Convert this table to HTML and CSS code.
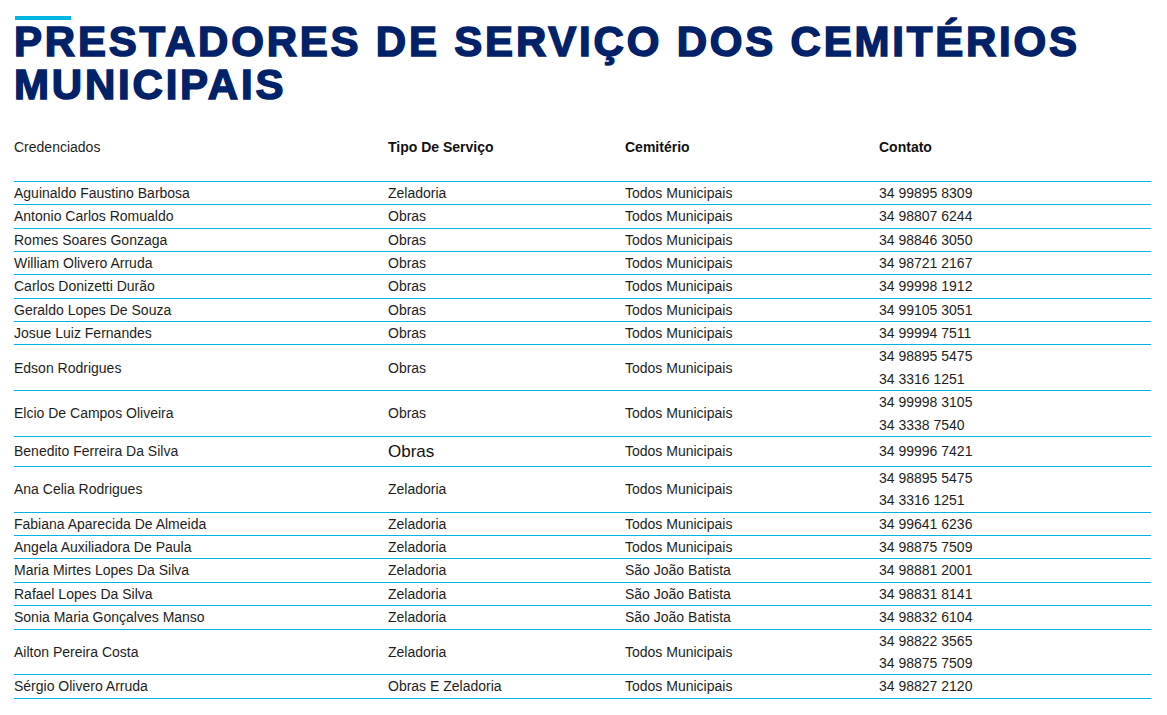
FILE: index.html
```html
<!DOCTYPE html>
<html lang="pt-BR">
<head>
<meta charset="utf-8">
<title>Prestadores de Serviço dos Cemitérios Municipais</title>
<link rel="stylesheet" href="styles.css">
</head>
<body>
<main class="page">
  <div class="accent"></div>
  <h1 class="title">PRESTADORES DE SERVIÇO DOS CEMITÉRIOS MUNICIPAIS</h1>
  <table class="providers">
    <colgroup>
      <col class="c-name"><col class="c-type"><col class="c-cem"><col class="c-contact">
    </colgroup>
    <thead>
      <tr>
        <th class="plain">Credenciados<br>&nbsp;</th>
        <th>Tipo De Serviço<br>&nbsp;</th>
        <th>Cemitério<br>&nbsp;</th>
        <th>Contato<br>&nbsp;</th>
      </tr>
    </thead>
    <tbody>
      <tr><td>Aguinaldo Faustino Barbosa</td><td>Zeladoria</td><td>Todos Municipais</td><td>34 99895 8309</td></tr>
      <tr><td>Antonio Carlos Romualdo</td><td>Obras</td><td>Todos Municipais</td><td>34 98807 6244</td></tr>
      <tr><td>Romes Soares Gonzaga</td><td>Obras</td><td>Todos Municipais</td><td>34 98846 3050</td></tr>
      <tr><td>William Olivero Arruda</td><td>Obras</td><td>Todos Municipais</td><td>34 98721 2167</td></tr>
      <tr><td>Carlos Donizetti Durão</td><td>Obras</td><td>Todos Municipais</td><td>34 99998 1912</td></tr>
      <tr><td>Geraldo Lopes De Souza</td><td>Obras</td><td>Todos Municipais</td><td>34 99105 3051</td></tr>
      <tr><td>Josue Luiz Fernandes</td><td>Obras</td><td>Todos Municipais</td><td>34 99994 7511</td></tr>
      <tr><td>Edson Rodrigues</td><td>Obras</td><td>Todos Municipais</td><td>34 98895 5475<br>34 3316 1251</td></tr>
      <tr><td>Elcio De Campos Oliveira</td><td>Obras</td><td>Todos Municipais</td><td>34 99998 3105<br>34 3338 7540</td></tr>
      <tr><td>Benedito Ferreira Da Silva</td><td class="big">Obras</td><td>Todos Municipais</td><td>34 99996 7421</td></tr>
      <tr><td>Ana Celia Rodrigues</td><td>Zeladoria</td><td>Todos Municipais</td><td>34 98895 5475<br>34 3316 1251</td></tr>
      <tr><td>Fabiana Aparecida De Almeida</td><td>Zeladoria</td><td>Todos Municipais</td><td>34 99641 6236</td></tr>
      <tr><td>Angela Auxiliadora De Paula</td><td>Zeladoria</td><td>Todos Municipais</td><td>34 98875 7509</td></tr>
      <tr><td>Maria Mirtes Lopes Da Silva</td><td>Zeladoria</td><td>São João Batista</td><td>34 98881 2001</td></tr>
      <tr><td>Rafael Lopes Da Silva</td><td>Zeladoria</td><td>São João Batista</td><td>34 98831 8141</td></tr>
      <tr><td>Sonia Maria Gonçalves Manso</td><td>Zeladoria</td><td>São João Batista</td><td>34 98832 6104</td></tr>
      <tr><td>Ailton Pereira Costa</td><td>Zeladoria</td><td>Todos Municipais</td><td>34 98822 3565<br>34 98875 7509</td></tr>
      <tr><td>Sérgio Olivero Arruda</td><td>Obras E Zeladoria</td><td>Todos Municipais</td><td>34 98827 2120</td></tr>
    </tbody>
  </table>
</main>
</body>
</html>
```

FILE: styles.css
```css
html, body {
  margin: 0;
  padding: 0;
  background: #ffffff;
}

body {
  font-family: "Liberation Sans", Arial, sans-serif;
  color: #1e1e1e;
}

.page {
  padding: 16px 16px 0 14px;
}

.accent {
  width: 56px;
  height: 4px;
  margin-left: 1px;
  background: #00b5e2;
  margin-bottom: 1px;
}

.title {
  margin: 0 0 30px 0;
  font-family: "Liberation Sans", Arial, sans-serif;
  font-weight: 700;
  font-size: 42px;
  line-height: 42.5px;
  letter-spacing: 2.8px;
  color: #012169;
  -webkit-text-stroke: 1.5px #012169;
}

.providers {
  width: 1137px;
  table-layout: fixed;
  border-collapse: collapse;
  font-size: 14px;
  line-height: 22.37px;
}

.c-name { width: 374px; }
.c-type { width: 237px; }
.c-cem { width: 254px; }
.c-contact { width: 272px; }

.providers th,
.providers td {
  padding: 0;
  text-align: left;
  vertical-align: middle;
  border-bottom: 1px solid #00b5e2;
}

.providers th {
  font-weight: 700;
  color: #111111;
}

.providers th.plain {
  font-weight: 400;
  color: #1e1e1e;
}

.providers td.big {
  font-size: 17px;
  line-height: 29px;
  color: #111111;
}
```
